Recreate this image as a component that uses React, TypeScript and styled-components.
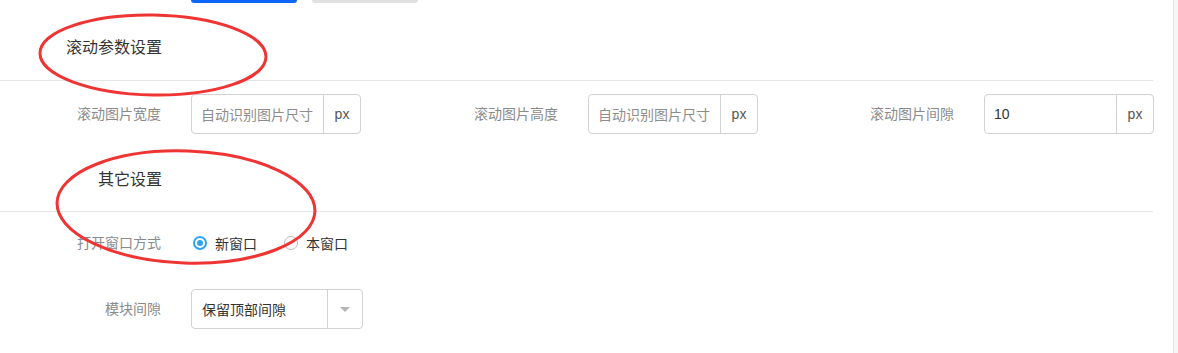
import React from "react";
import styled, { createGlobalStyle } from "styled-components";

const GlobalStyle = createGlobalStyle`
  html, body { margin: 0; padding: 0; background: #fff; }
  body {
    font-family: "Liberation Sans", "Noto Sans CJK SC", sans-serif;
    font-size: 14px;
    color: #333;
    overflow: hidden;
  }
`;

const Page = styled.div`
  position: relative;
  width: 1178px;
  height: 353px;
  display: flex;
  overflow: hidden;
  background: #fff;
`;

const Content = styled.div`
  flex: 1;
  display: flex;
  flex-direction: column;
`;

const Scrollbar = styled.div`
  width: 4px;
  border-left: 1px solid #e3e3e3;
  background: #f6f6f6;
`;

const ButtonBar = styled.div`
  display: flex;
  gap: 15px;
  padding-left: 191px;
  margin-top: -33px;
  height: 36px;
`;

const Button = styled.div<{ $primary?: boolean }>`
  width: 106px;
  height: 36px;
  border-radius: 3px;
  background: ${(p) => (p.$primary ? "#0b66f5" : "#e1e1e1")};
`;

const Section = styled.div<{ $top: number; $bottom: number }>`
  padding-top: ${(p) => p.$top}px;
  padding-bottom: ${(p) => p.$bottom}px;
  width: 1153px;
  border-bottom: 1px solid #e6e6e6;
`;

const SectionTitle = styled.div`
  width: 162px;
  text-align: right;
  font-size: 16px;
  line-height: 24px;
  color: #333;
`;

const Grid = styled.div<{ $mt: number }>`
  display: grid;
  grid-template-columns: 397px 396px 1fr;
  margin-top: ${(p) => p.$mt}px;
`;

const Row = styled.div<{ $mt: number }>`
  display: flex;
  align-items: center;
  height: 40px;
  margin-top: ${(p) => p.$mt}px;
`;

const Field = styled.div`
  display: flex;
  align-items: center;
  height: 40px;
`;

const Label = styled.div`
  width: 161px;
  margin-right: 30px;
  text-align: right;
  color: #8a8a8a;
  font-size: 14px;
  line-height: 20px;
`;

const InputGroup = styled.div`
  display: flex;
  width: 170px;
  height: 40px;
  box-sizing: border-box;
  border: 1px solid #d2d2d2;
  border-radius: 4px;
  overflow: hidden;
`;

const InputText = styled.div<{ $placeholder?: boolean }>`
  flex: 1;
  display: flex;
  align-items: center;
  padding-left: 9px;
  color: ${(p) => (p.$placeholder ? "#8d8d8d" : "#333")};
  font-size: 14px;
  white-space: nowrap;
  overflow: hidden;
`;

const Addon = styled.div`
  width: 36px;
  display: flex;
  align-items: center;
  justify-content: center;
  border-left: 1px solid #d2d2d2;
  color: #555;
  font-size: 14px;
`;

const RadioGroup = styled.div`
  display: flex;
  align-items: center;
`;

const RadioItem = styled.label`
  display: flex;
  align-items: center;
  margin-right: 25px;
  color: #333;
  font-size: 14px;
`;

const RadioCircle = styled.span<{ $checked?: boolean }>`
  position: relative;
  width: 14px;
  height: 14px;
  box-sizing: border-box;
  border-radius: 50%;
  margin-left: 2px;
  margin-right: 8px;
  border: ${(p) => (p.$checked ? "2px solid #2fa3f6" : "1px solid #b9b9b9")};
  background: #fff;
  &::after {
    content: "";
    display: ${(p) => (p.$checked ? "block" : "none")};
    position: absolute;
    left: 2px;
    top: 2px;
    width: 6px;
    height: 6px;
    border-radius: 50%;
    background: #2fa3f6;
  }
`;

const Select = styled.div`
  display: flex;
  width: 172px;
  height: 40px;
  box-sizing: border-box;
  border: 1px solid #d2d2d2;
  border-radius: 4px;
`;

const SelectValue = styled.div`
  flex: 1;
  display: flex;
  align-items: center;
  padding-left: 10px;
  color: #333;
  font-size: 14px;
`;

const SelectArrow = styled.div`
  width: 34px;
  display: flex;
  align-items: center;
  justify-content: center;
  border-left: 1px solid #d2d2d2;
  &::before {
    content: "";
    width: 0;
    height: 0;
    border-left: 5px solid transparent;
    border-right: 5px solid transparent;
    border-top: 5px solid #b5b5b5;
  }
`;

const Annotations = styled.svg`
  position: absolute;
  left: 0;
  top: 0;
  pointer-events: none;
`;

const fields = [
  { label: "滚动图片宽度", value: "自动识别图片尺寸", placeholder: true },
  { label: "滚动图片高度", value: "自动识别图片尺寸", placeholder: true },
  { label: "滚动图片间隙", value: "10", placeholder: false },
];

export default function App() {
  return (
    <>
      <GlobalStyle />
      <Page>
        <Content>
          <ButtonBar>
            <Button $primary />
            <Button />
          </ButtonBar>
          <Section $top={33} $bottom={20}>
            <SectionTitle>滚动参数设置</SectionTitle>
          </Section>
          <Grid $mt={13}>
            {fields.map((f) => (
              <Field key={f.label}>
                <Label>{f.label}</Label>
                <InputGroup>
                  <InputText $placeholder={f.placeholder}>{f.value}</InputText>
                  <Addon>px</Addon>
                </InputGroup>
              </Field>
            ))}
          </Grid>
          <Section $top={34} $bottom={19}>
            <SectionTitle>其它设置</SectionTitle>
          </Section>
          <Row $mt={11}>
            <Label>打开窗口方式</Label>
            <RadioGroup>
              <RadioItem>
                <RadioCircle $checked />
                新窗口
              </RadioItem>
              <RadioItem>
                <RadioCircle />
                本窗口
              </RadioItem>
            </RadioGroup>
          </Row>
          <Row $mt={26}>
            <Label>模块间隙</Label>
            <Select>
              <SelectValue>保留顶部间隙</SelectValue>
              <SelectArrow />
            </Select>
          </Row>
        </Content>
        <Scrollbar />
        <Annotations width="1178" height="353" viewBox="0 0 1178 353">
          <ellipse
            cx="153"
            cy="55"
            rx="113"
            ry="40"
            fill="none"
            stroke="#ef3434"
            strokeWidth="3"
            transform="rotate(1 153 55)"
          />
          <ellipse
            cx="186"
            cy="207"
            rx="129"
            ry="56"
            fill="none"
            stroke="#ef3434"
            strokeWidth="3"
            transform="rotate(2 186 207)"
          />
        </Annotations>
      </Page>
    </>
  );
}
